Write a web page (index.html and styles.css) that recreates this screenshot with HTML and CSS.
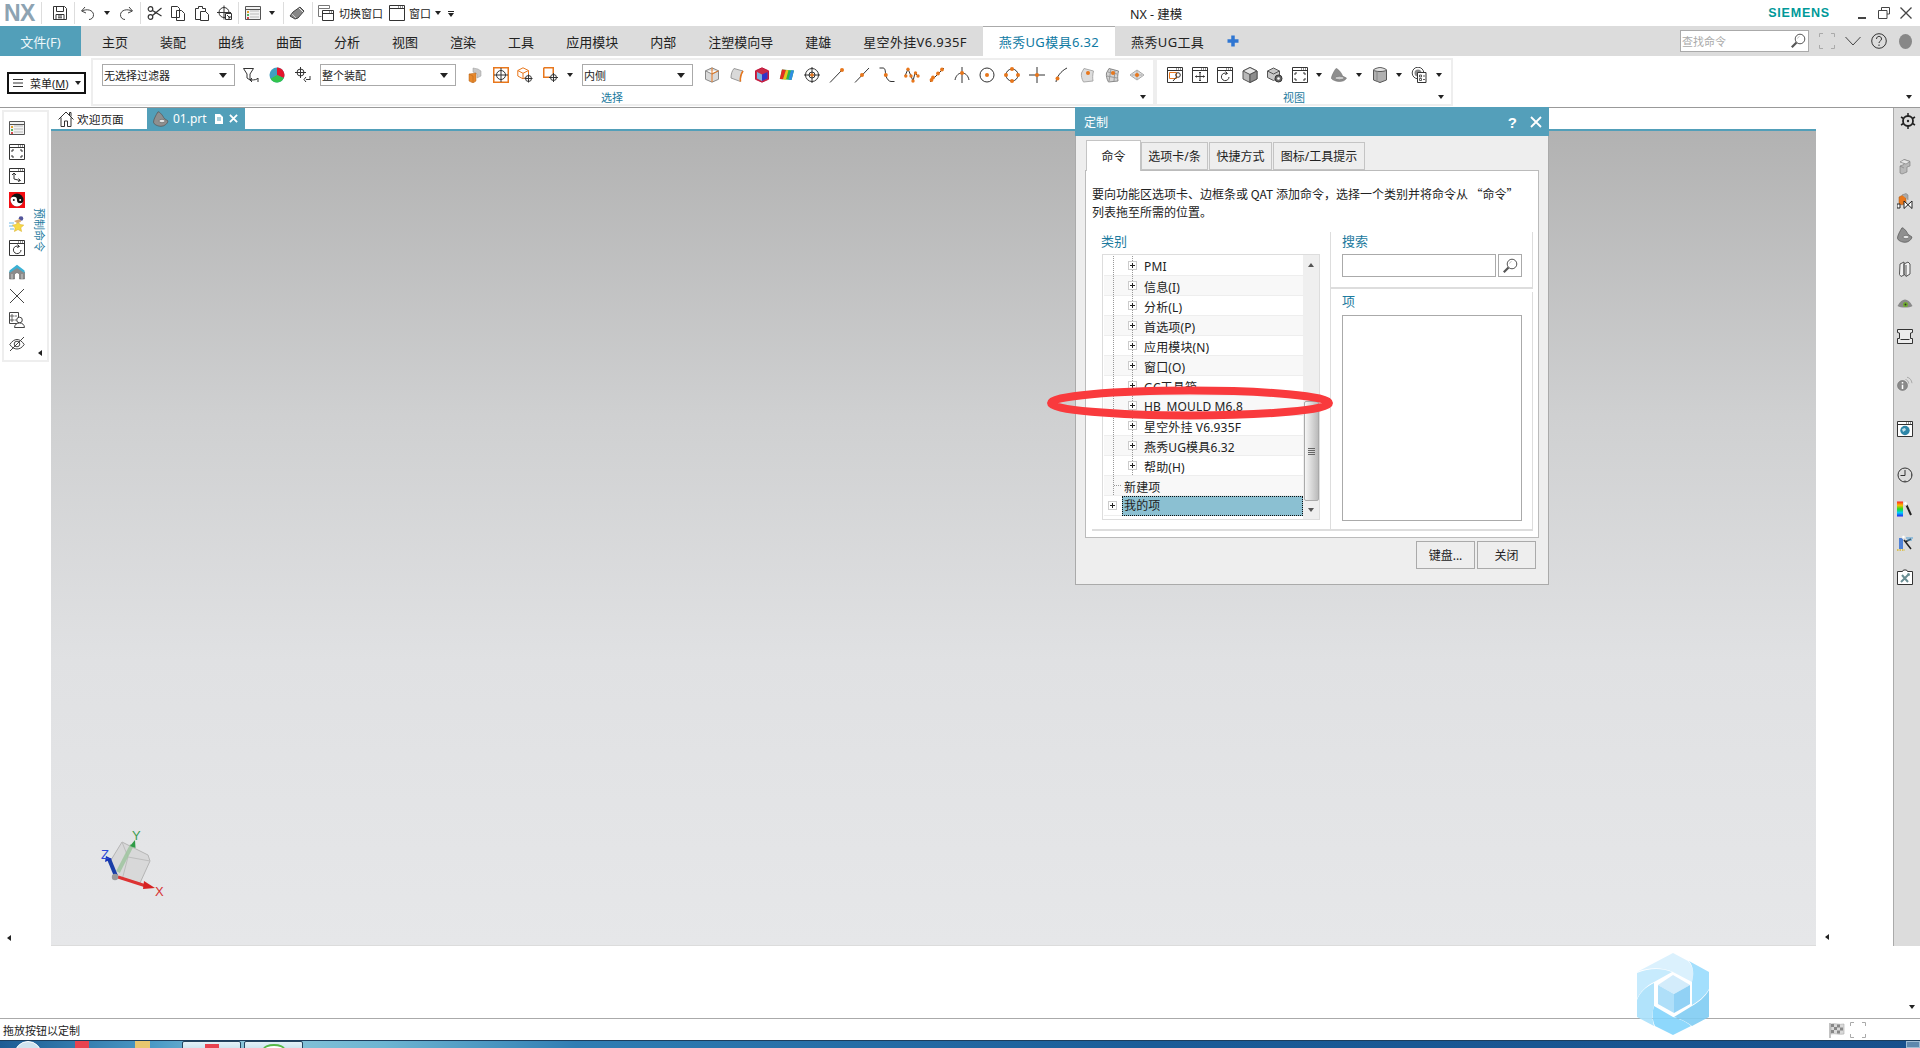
FILE: index.html
```html
<!DOCTYPE html>
<html lang="zh">
<head>
<meta charset="utf-8">
<title>NX - 建模</title>
<link rel="stylesheet" href="styles.css">
</head>
<body>
<svg class="defs" aria-hidden="true">
<defs>
<symbol id="save" viewBox="0 0 16 16"><path d="M1.5 1.5h11l2 2v11h-13z M4.5 1.5v5h7v-5 M4 14.5v-5h8v5 M6 11h4 M6 12.800h4" fill="none" stroke="#333"/></symbol>
<symbol id="undo" viewBox="0 0 16 16"><path d="M5 2 1.500 6 6 8 M2 6c5-2.500 11-1 11.500 3.500.3 3-2 5-4.500 5" fill="none" stroke="#444"/></symbol>
<symbol id="redo" viewBox="0 0 16 16"><path d="M11 2l3.500 4L10 8 M14 6C9 3.500 3 5 2.500 9.500c-.3 3 2 5 4.500 5" fill="none" stroke="#444"/></symbol>
<symbol id="cut" viewBox="0 0 16 16"><g fill="none" stroke="#333" stroke-width="1.200"><circle cx="3.500" cy="4" r="2.300"/><circle cx="3.500" cy="12" r="2.300"/><path d="M5.500 5.500 14.500 11 M5.500 10.500 14.500 3"/></g><circle cx="8.500" cy="7.800" r="1" fill="#333"/></symbol>
<symbol id="copy" viewBox="0 0 16 16"><path d="M1.500 1.500h6l2 2v9h-8z M6.500 5.500h5l3 3v7h-8z" fill="#fff" stroke="#333"/></symbol>
<symbol id="paste" viewBox="0 0 16 16"><path d="M1.500 3.500h3v-2h4v2h3v11h-10z" fill="#fff" stroke="#333"/><path d="M6.500 6.500h5l3 3v6h-8z" fill="#fff" stroke="#333"/></symbol>
<symbol id="pasteref" viewBox="0 0 16 16"><circle cx="7" cy="7.500" r="5" fill="none" stroke="#333"/><path d="M7 .5v14M0 7.500h14" stroke="#333"/><path d="M8.500 8.500h6v6h-6z" fill="#fff" stroke="#333"/><path d="M10 10l3 3m0-2v2h-2" fill="none" stroke="#333"/></symbol>
<symbol id="table" viewBox="0 0 16 16"><path d="M.5 1.500h15v13H.5z" fill="#f2f2f2" stroke="#555"/><path d="M.5 4.500h15" stroke="#555"/><path d="M2 6h2v2H2z" fill="#e5a02c"/><path d="M2 9h2v2H2z" fill="#57b45e"/><path d="M2 12h2v2H2z" fill="#d14b4b"/><path d="M5 6h9M5 9h9M5 12h9" stroke="#bbb"/></symbol>
<symbol id="pin" viewBox="0 0 16 16"><path d="M1 11l5 3 3-1 6-7-4-4-7 5z" fill="#888" stroke="#444"/><path d="M10 3l4 4" stroke="#eee"/><path d="M3 9l4 4" stroke="#ccc"/></symbol>
<symbol id="winswitch" viewBox="0 0 16 16"><path d="M.5.5h11v3H.5z M.5 3.500v8h3" fill="#fff" stroke="#777"/><path d="M4.500 5.500h11v10h-11z M4.500 8.500h11" fill="#fff" stroke="#333"/><path d="M11 7h3" stroke="#333" stroke-dasharray="1 1"/></symbol>
<symbol id="win" viewBox="0 0 16 16"><path d="M.5.5h15v15H.5z M.5 3.500h15" fill="#fff" stroke="#333"/><path d="M9 2h5" stroke="#333" stroke-dasharray="1 1"/></symbol>
<symbol id="winfit" viewBox="0 0 16 16"><path d="M.5.500h15v15H.5z M.5 3.500h15" fill="#fff" stroke="#333"/><path d="M9 2h5" stroke="#333" stroke-dasharray="1 1"/><path d="M3 8V6h2M11 6h2v2M13 11v2h-2M5 13H3v-2" fill="none" stroke="#333"/></symbol>
<symbol id="winaxes" viewBox="0 0 16 16"><path d="M.5.500h15v15H.5z M.5 3.500h15" fill="#fff" stroke="#333"/><path d="M9 2h5" stroke="#333" stroke-dasharray="1 1"/><path d="M3 7l2-2 2 2M5 5v6l6 1.500M9.500 10.500l2 2-2.500 1" fill="none" stroke="#333"/></symbol>
<symbol id="winrot" viewBox="0 0 16 16"><path d="M.5.500h15v15H.5z M.5 3.500h15" fill="#fff" stroke="#333"/><path d="M9 2h5" stroke="#333" stroke-dasharray="1 1"/><path d="M10 6.500A3.800 3.800 0 1 0 12 10M8.500 4.500l2 2-2.300 1" fill="none" stroke="#333"/></symbol>
<symbol id="winpan" viewBox="0 0 16 16"><path d="M.5.500h15v15H.5z M.5 3.500h15" fill="#fff" stroke="#333"/><path d="M9 2h5" stroke="#333" stroke-dasharray="1 1"/><path d="M8 5v9M3.500 9.500h9M7 6l1-1 1 1M7 13l1 1 1-1M4.500 8.500l-1 1 1 1M11.500 8.500l1 1-1 1" fill="none" stroke="#333"/></symbol>
<symbol id="winzoom" viewBox="0 0 16 16"><path d="M.5.500h15v15H.5z M.5 3.500h15" fill="#fff" stroke="#333"/><path d="M9 2h5" stroke="#333" stroke-dasharray="1 1"/><path d="M2.500 5.500h7v6h-7z" fill="none" stroke="#e8771c"/><circle cx="11" cy="8" r="2.300" fill="none" stroke="#333"/><path d="M9.500 10 6 14" stroke="#333"/></symbol>
<symbol id="winglobe" viewBox="0 0 16 16"><path d="M.5.500h15v15H.5z M.5 3.500h15" fill="#fff" stroke="#333"/><path d="M9 2h5" stroke="#333" stroke-dasharray="1 1"/><circle cx="8" cy="9.500" r="4.700" fill="#2e86a8"/><path d="M5 8l3-1 1 2-3 2z" fill="#bfe0ea"/></symbol>
<symbol id="filter" viewBox="0 0 16 16"><path d="M.5 1.500h10L7 7v6l-3-2V7z" fill="#fff" stroke="#333"/><path d="M9 13l-2 0M9 11l-2 2 2 2M8 13c4 0 6-.5 7-2M15 15v-4" fill="none" stroke="#333"/></symbol>
<symbol id="wheel" viewBox="0 0 16 16"><circle cx="8" cy="8" r="7.500" fill="#3f9fc0"/><path d="M8 8V.5A7.500 7.500 0 0 1 14.800 11z" fill="#e4152c"/><path d="M8 8l6.800 3A7.500 7.500 0 0 1 1.500 11.800z" fill="#31c44d"/></symbol>
<symbol id="snapback" viewBox="0 0 16 16"><circle cx="5.500" cy="5.500" r="3.500" fill="none" stroke="#333"/><path d="M5.500 0v11M0 5.500h11" stroke="#333"/><path d="M11 12.500h4M11 10l-2 2.500 2 2.500M15 9v4" fill="none" stroke="#333"/></symbol>
<symbol id="part" viewBox="0 0 16 16"><path d="M6 1l5 1 3 2v5l-4 2V7L6 5z" fill="#c8c8c8" stroke="#999" stroke-width=".5"/><path d="M2 7l7-1v8l-3 2-4-2z" fill="#e8892c" stroke="#b5641c" stroke-width=".5"/><path d="M2 7l4 2v7" fill="none" stroke="#b5641c" stroke-width=".5"/></symbol>
<symbol id="osel" viewBox="0 0 16 16"><path d="M.75.75h14.500v14.500H.75z" fill="none" stroke="#e8771c" stroke-width="1.500"/><circle cx="8" cy="8" r="4.500" fill="none" stroke="#333"/><path d="M8 1v14M1 8h14" stroke="#333"/></symbol>
<symbol id="ocube" viewBox="0 0 16 16"><path d="M6 .8 11.500 3.500v5.500L6 11.800.8 9V3.500z M.8 3.500 6 6.300l5.500-2.800M6 6.300v5.500" fill="#fff" stroke="#e8771c"/><circle cx="11.500" cy="11.500" r="3" fill="#fff" stroke="#333"/><path d="M11.500 7.500v8M7.500 11.500h8" stroke="#333"/></symbol>
<symbol id="osq" viewBox="0 0 16 16"><path d="M.75.75h9.500v9.500" fill="none" stroke="#e8771c" stroke-width="1.500"/><path d="M.75.75v9.500h7" fill="none" stroke="#e8771c" stroke-width="1.500"/><circle cx="10.500" cy="10.500" r="3" fill="#fff" stroke="#333"/><path d="M10.500 6v9M6 10.500h9" stroke="#333"/></symbol>
<symbol id="s1" viewBox="0 0 16 16"><path d="M8 .8 14.500 3.800v8.500L8 15.200 1.500 12.300V3.800z M1.500 3.800 8 7l6.500-3.200" fill="#d9d9d9" stroke="#888"/><path d="M8 7v8M8 .8v6.200L14.500 3.800" fill="none" stroke="#e8771c"/></symbol>
<symbol id="s2" viewBox="0 0 16 16"><path d="M5 1.500 14 4c-2 3-3 7-2.500 10.500L2 11C2 7 3 4 5 1.500z" fill="#d9d9d9" stroke="#999"/><path d="M14 4c-2 3-3 7-2.500 10.500" fill="none" stroke="#e8771c" stroke-width="1.500"/></symbol>
<symbol id="s3" viewBox="0 0 16 16"><path d="M8 .8 14.500 3.800v8.500L8 15.200 1.500 12.300V3.800z" fill="#c92a45" stroke="#c2153c"/><path d="M3 5 8 7.500V14L3 11.500z" fill="#79b4e0"/><path d="M8 7.500 13.500 5v6.500L8 14z" fill="#3034c9"/></symbol>
<symbol id="s4" viewBox="0 0 16 16"><path d="M3 2.500 15 3.500 12.500 13 .8 12z" fill="#2fb44a"/><path d="M3 2.500 7 3l-3 9.300L.8 12z" fill="#e42d22"/><path d="M7 3l2.500.3L7 12.500 4 12.300z" fill="#efc21b"/><path d="M12 3.200 15 3.500 12.500 13l-3-.2z" fill="#2f8fe4"/></symbol>
<symbol id="s5" viewBox="0 0 16 16"><circle cx="8" cy="8" r="6.500" fill="none" stroke="#333"/><circle cx="8" cy="8" r="3" fill="none" stroke="#333"/><path d="M8 0v16M0 8h16" stroke="#333"/><circle cx="8" cy="8" r="1.800" fill="#e8771c"/></symbol>
<symbol id="s6" viewBox="0 0 16 16"><path d="M1 15.500 13 3" stroke="#333"/><circle cx="13" cy="3" r="2" fill="#e8771c"/></symbol>
<symbol id="s7" viewBox="0 0 16 16"><path d="M1 15.500 15 1" stroke="#333"/><circle cx="8" cy="8" r="2" fill="#e8771c"/></symbol>
<symbol id="s8" viewBox="0 0 16 16"><path d="M.5 1H4c3 0 2 5 3 8 .8 3 3 5.500 5 5.500h3.500" fill="none" stroke="#333"/><circle cx="6.800" cy="8" r="2" fill="#e8771c"/></symbol>
<symbol id="s9" viewBox="0 0 16 16"><path d="M1 9l3-7 3 7 2 5 2-8 3 3" fill="none" stroke="#333"/><g fill="#e8771c"><circle cx="1.800" cy="9" r="1.700"/><circle cx="4" cy="2.200" r="1.700"/><circle cx="7" cy="9" r="1.700"/><circle cx="9" cy="14" r="1.700"/><circle cx="11.500" cy="6" r="1.700"/><circle cx="14" cy="9" r="1.700"/></g></symbol>
<symbol id="s10" viewBox="0 0 16 16"><path d="M1 15 15 1" stroke="#333" fill="none"/><g fill="#e8771c"><circle cx="2.500" cy="13" r="1.900"/><circle cx="4" cy="10.500" r="1.900"/><circle cx="9" cy="6.500" r="1.900"/><circle cx="13" cy="2.500" r="1.900"/></g></symbol>
<symbol id="s11" viewBox="0 0 16 16"><path d="M8 0v16M1 13C2 8 5 6 8 6s6 2 7 7" fill="none" stroke="#333"/><circle cx="8" cy="6" r="2" fill="#e8771c"/></symbol>
<symbol id="s12" viewBox="0 0 16 16"><circle cx="8" cy="8" r="7" fill="none" stroke="#333"/><circle cx="8" cy="8" r="2" fill="#e8771c"/></symbol>
<symbol id="s13" viewBox="0 0 16 16"><circle cx="8" cy="8" r="6" fill="none" stroke="#333"/><g fill="#e8771c"><circle cx="8" cy="2" r="2"/><circle cx="8" cy="14" r="2"/><circle cx="2" cy="8" r="2"/><circle cx="14" cy="8" r="2"/></g></symbol>
<symbol id="s14" viewBox="0 0 16 16"><path d="M8 0v16M0 8h16" stroke="#333"/><circle cx="8" cy="8" r="2" fill="#e8771c"/></symbol>
<symbol id="s15" viewBox="0 0 16 16"><path d="M2 15c.5-5 5-11 11-14" fill="none" stroke="#333"/><circle cx="3.500" cy="11.500" r="2" fill="#e8771c"/></symbol>
<symbol id="s16" viewBox="0 0 16 16"><path d="M5 1.500 14.500 4c-1 4-1 7-.5 10L4.500 15C2.800 12 2 9 2.500 6z" fill="#ddd" stroke="#aaa"/><circle cx="9" cy="6" r="2" fill="#e8771c"/></symbol>
<symbol id="s17" viewBox="0 0 16 16"><path d="M5 1.500 14.500 4c-1 4-1 7-.5 10L4.500 15C2.800 12 2 9 2.500 6z" fill="#d4d4d4" stroke="#888"/><path d="M4 5l9 2M3 9l10 2M7 2l-2 12M11 3l-1 11" stroke="#999" fill="none"/><circle cx="9" cy="6" r="2" fill="#e8771c"/></symbol>
<symbol id="s18" viewBox="0 0 16 16"><path d="M8 3l7 5-7 5-7-5z" fill="#ddd" stroke="#aaa"/><path d="M3 8h10M8 4v8" stroke="#aaa"/><circle cx="8" cy="8" r="2" fill="#e8771c"/></symbol>
<symbol id="cube" viewBox="0 0 16 16"><path d="M8 .5 15 4v8l-7 3.500L1 12V4z" fill="#b8b8b8" stroke="#555"/><path d="M1 4l7 3.500L15 4 8 .5z" fill="#e6e6e6" stroke="#555"/><path d="M8 7.500v8" stroke="#555"/><path d="M8 7.500 15 4v8l-7 3.500z" fill="#8c8c8c" stroke="#555"/></symbol>
<symbol id="cubegear" viewBox="0 0 16 16"><path d="M6.500 1 12.500 4v6.500l-6 3-6-3V4z" fill="#c8c8c8" stroke="#555"/><path d="M.5 4l6 3 6-3" fill="none" stroke="#555"/><circle cx="11.500" cy="11.500" r="3.500" fill="#666" stroke="#333"/><circle cx="11.500" cy="11.500" r="1.300" fill="#fff"/></symbol>
<symbol id="shade" viewBox="0 0 16 16"><path d="M5 1.500c2 0 6 5 6.500 7.500l4 2c-1 2.500-4 3.500-7 3.500S1 13 .5 11.500 3 4 5 1.500z" fill="#8e8e8e" stroke="#666" stroke-width=".5"/><ellipse cx="8.500" cy="11" rx="4.500" ry="1.700" fill="#ccc" stroke="#666" stroke-width=".5"/></symbol>
<symbol id="cyl" viewBox="0 0 16 16"><path d="M8 .5 14.500 3v10L8 15.500 1.500 13V3z" fill="#b0b0b0" stroke="#555"/><path d="M1.500 3C3 5 13 5 14.500 3 13 1 8 .5 8 .5S3 1 1.500 3z" fill="#e2e2e2" stroke="#555"/><path d="M5 4.500v10.500" stroke="#888"/></symbol>
<symbol id="viewlist" viewBox="0 0 16 16"><circle cx="7" cy="6" r="5.800" fill="#fff" stroke="#444"/><circle cx="7" cy="6" r="3.500" fill="#888"/><path d="M6.500 5.500h8.500v10H6.500z" fill="#fff" stroke="#333"/><path d="M8.500 8h2v2h-2zM8.500 11.500h2v2h-2zM12 9h2M12 12.500h2" fill="none" stroke="#333" stroke-width=".8"/></symbol>
<symbol id="yin" viewBox="0 0 16 16"><path d="M0 0h16v16H0z" fill="#f30d12"/><circle cx="8" cy="8" r="6.500" fill="#111"/><path d="M1.500 8A6.500 6.500 0 0 1 8 1.500 3.250 3.250 0 0 1 8 8a3.250 3.250 0 0 0 0 6.500A6.500 6.500 0 0 1 1.500 8z" fill="#fff" transform="rotate(-90 8 8)"/><circle cx="4.800" cy="8" r="1" fill="#111"/><circle cx="11.200" cy="8" r="1" fill="#fff"/></symbol>
<symbol id="star" viewBox="0 0 16 16"><path d="M9 5l1.800 3.500 4 .6-3 2.700.8 3.700L9 13.500l-3.600 2 .8-3.700-3-2.700 4-.6z" fill="#f7d945" stroke="#d5a920" stroke-width=".5"/><path d="M0 7h5M0 10h4M1 13h4" stroke="#6fb7e6"/><circle cx="12" cy="2.500" r="2.300" fill="#54569c"/><path d="M5 5l6-2 1 3-4 1z" fill="#dcab6d"/></symbol>
<symbol id="arch" viewBox="0 0 16 16"><path d="M.5 8 8 2l7.500 6v7h-5V10L8 8.500 5.500 10v5h-5z" fill="#8b8b8b" stroke="#555" stroke-width=".5"/><path d="M.5 6.500 8 .8l7.500 5.700V9L8 4 .5 9z" fill="#3bb2d6"/><path d="M3 10v5M13 10v5" stroke="#ccc"/></symbol>
<symbol id="xmark" viewBox="0 0 16 16"><path d="M1 1l14 14M15 1 1 15" stroke="#444" fill="none"/></symbol>
<symbol id="docuser" viewBox="0 0 16 16"><path d="M.5.500h9v11H.5z" fill="#fff" stroke="#444"/><path d="M2 3h2v2H2zM2 7h2v2H2zM5.500 4h2.500M5.500 8h2" fill="none" stroke="#444" stroke-width=".8"/><circle cx="10.500" cy="8" r="2.800" fill="#fff" stroke="#444"/><path d="M5.500 15.500c.3-3 2-4.500 5-4.500s4.700 1.500 5 4.500z" fill="#fff" stroke="#444"/></symbol>
<symbol id="eyeoff" viewBox="0 0 16 16"><path d="M.8 8.500C3 5.200 5.500 3.500 8 3.500s5 1.700 7.200 5C13 11.800 10.500 13 8 13S3 11.800.8 8.500z" fill="none" stroke="#444"/><circle cx="8" cy="8" r="2.800" fill="none" stroke="#444"/><path d="M1 15 15 1" stroke="#444"/></symbol>
<symbol id="gear" viewBox="0 0 16 16"><circle cx="8" cy="8" r="5" fill="none" stroke="#222" stroke-width="1.800"/><circle cx="8" cy="8" r="1.200" fill="#222"/><path d="M8 0v3M8 13v3M1 4l2.500 1.500M12.500 10.500 15 12M1 12l2.500-1.500M12.500 5.500 15 4" stroke="#222" stroke-width="1.500"/></symbol>
<symbol id="blocks" viewBox="0 0 16 16"><path d="M7 .5l6 2v4.500l-3 1v5l-5 2-2-1V7l4-1.500z" fill="#b8b8b8" stroke="#777" stroke-width=".6"/><path d="M7 .5 3 3l6 2 4-2.500zM3 7l4 2" fill="#e6e6e6" stroke="#777" stroke-width=".6"/></symbol>
<symbol id="hour" viewBox="0 0 16 16"><path d="M2 4l4-2 3 1.500V10l-4 2-3-1.500z" fill="#e8771c" stroke="#9c5414" stroke-width=".5"/><path d="M5 2l4-1.500 2 1.500v5" fill="#aaa" stroke="#777" stroke-width=".5"/><path d="M0 11v4h3v-4zM7 8l8 7.500V8L7 15.500z" fill="#fff" stroke="#222"/></symbol>
<symbol id="shell" viewBox="0 0 16 16"><path d="M5 .8c2 0 5 4 6 6.500l4 2.700c-.5 3-4 5.300-7 5.300S.5 13.500.5 11 3 4 5 .8z" fill="#8f8f8f" stroke="#555" stroke-width=".7"/><ellipse cx="9" cy="10" rx="3" ry="1.700" fill="#e4e4e4" stroke="#555" stroke-width=".6"/></symbol>
<symbol id="books" viewBox="0 0 16 16"><path d="M3 3l4-2v13l-3 1.500-1.500-2zM7 3l4-2 2 2v10l-4 2.500L7 13z" fill="#f1f1f1" stroke="#555"/><path d="M9 4v11" stroke="#555"/></symbol>
<symbol id="eye" viewBox="0 0 16 16"><path d="M.5 11C3 6.500 5.500 4.500 8 4.500S13 6.500 15.500 11C12 13 4 13 .5 11z" fill="#8a8a8a"/><circle cx="8.500" cy="9.500" r="2.500" fill="#6fae2d"/><circle cx="8.500" cy="9.500" r="1" fill="#333"/></symbol>
<symbol id="monitor" viewBox="0 0 16 16"><path d="M.5.500h15v3l-2 .5v5.500h2v5H.5v-5h2V4l-2-.5z" fill="#ececec" stroke="#333"/><path d="M3.500 10.500h9" stroke="#333"/></symbol>
<symbol id="info" viewBox="0 0 16 16"><circle cx="5.500" cy="10.500" r="5" fill="#8a8a8a" stroke="#666" stroke-width=".5"/><path d="M5.500 7v1.500M5.500 9.800V14" stroke="#fff" stroke-width="1.500"/><path d="M8.500 4.500c2 .5 3 2 3.200 4M10 2.200c3 .7 4.500 2.800 5 6" fill="none" stroke="#aaa"/></symbol>
<symbol id="clock" viewBox="0 0 16 16"><circle cx="8" cy="8" r="7" fill="none" stroke="#333"/><path d="M8 3v5.500H3.500M8 13.500v1.500M15 8h-1" fill="none" stroke="#333"/></symbol>
<symbol id="spectrum" viewBox="0 0 16 16"><defs><linearGradient id="rb" x1="0" x2="0" y1="0" y2="1"><stop offset="0" stop-color="#f22"/><stop offset=".25" stop-color="#fb0"/><stop offset=".5" stop-color="#2d2"/><stop offset=".75" stop-color="#0cf"/><stop offset="1" stop-color="#22e"/></linearGradient></defs><path d="M0 .5h6v15H0z" fill="url(#rb)"/><path d="M9 3l5 11" stroke="#222" stroke-width="2"/><circle cx="8.500" cy="2.500" r="2" fill="#fff" stroke="#ddd"/></symbol>
<symbol id="bluewand" viewBox="0 0 16 16"><path d="M2 3h4v11H2z" fill="#4d80d6"/><path d="M0 15h8" stroke="#d9b92c" stroke-width="1.500" stroke-dasharray="1.500 1"/><path d="M7 5l7 9M8 7l6-3" stroke="#222" stroke-width="1.500"/><path d="M9 3h7M10 5h5" stroke="#4d9ed6"/><circle cx="6.500" cy="2" r="1.800" fill="#fff" stroke="#ddd"/></symbol>
<symbol id="tools" viewBox="0 0 16 16"><path d="M.5 2.500h5l1-1.500h3l1 1.500h5v13H.5z" fill="#fff" stroke="#333"/><path d="M4 13 11 6M5 6l6 7" stroke="#6b8f94" stroke-width="2"/><circle cx="11.500" cy="5.500" r="1.500" fill="#6b8f94"/></symbol>
<symbol id="home" viewBox="0 0 16 16"><path d="M.5 8.500 8 1l7.500 7.500M3 6.500v9h3.500V10h3v5.500H13v-9M11.500 4V1.500H13v4" fill="none" stroke="#333"/></symbol>
<symbol id="mag" viewBox="0 0 16 16"><circle cx="10" cy="6" r="4.800" fill="#fff" stroke="#555"/><path d="M6.500 9.500 1.800 14.200" stroke="#555" stroke-width="2.200"/><path d="M7.500 5.500c.3-1 1-1.700 2-2" stroke="#bbb" fill="none"/></symbol>
<symbol id="corners" viewBox="0 0 16 16"><path d="M.5 4V.5H4M12 .5h3.500V4M15.500 12v3.500H12M4 15.500H.5V12" fill="none" stroke="#aaa"/></symbol>
<symbol id="flag" viewBox="0 0 16 16"><path d="M1 1v15" stroke="#aaa" stroke-width="1.400"/><path d="M2 2c4-1 8 1 13 0v10c-5 1-9-1-13 0z" fill="#d9d9d9" stroke="#aaa" stroke-width=".6"/><path d="M2 2h3v3H2zM8 2.500h3v3H8zM5 5h3v3H5zM11 5.500h3v3h-3zM2 8h3v3H2zM8 8.500h3v3H8z" fill="#888"/></symbol>
</defs>
</svg>

<header class="titlebar">
  <span class="nx">NX</span>
  <i class="sep ml5"></i>
  <svg class="i ml10"><use href="#save"/></svg>
  <i class="sep ml6"></i>
  <svg class="i ml5"><use href="#undo"/></svg>
  <i class="drop ml8"></i>
  <svg class="i ml8"><use href="#redo"/></svg>
  <i class="sep ml6"></i>
  <svg class="i ml6"><use href="#cut"/></svg>
  <svg class="i ml7"><use href="#copy"/></svg>
  <svg class="i ml8"><use href="#paste"/></svg>
  <svg class="i ml7"><use href="#pasteref"/></svg>
  <i class="sep ml5"></i>
  <svg class="i ml6"><use href="#table"/></svg>
  <i class="drop ml8"></i>
  <i class="sep ml8"></i>
  <svg class="i ml5"><use href="#pin"/></svg>
  <i class="sep ml7"></i>
  <svg class="i ml5"><use href="#winswitch"/></svg>
  <span class="qa-label ml5">切换窗口</span>
  <svg class="i ml6"><use href="#win"/></svg>
  <span class="qa-label ml4">窗口</span>
  <i class="drop ml4"></i>
  <i class="drop-bar ml7"></i>
  <span class="apptitle">NX - 建模</span>
  <span class="siemens">SIEMENS</span>
  <span class="wc-min"></span>
  <svg class="wc-restore" viewBox="0 0 12 12"><path d="M3.500 3V.5h8V7H9M.5 3.500H9v8H.5z" fill="#fff" stroke="#444"/></svg>
  <svg class="wc-close" viewBox="0 0 12 12"><path d="M.5.500l11 11M11.500.500l-11 11" stroke="#444" stroke-width="1.300" fill="none"/></svg>
</header>

<nav class="tabbar">
  <span class="filetab">文件(F)</span>
  <span class="tab">主页</span>
  <span class="tab">装配</span>
  <span class="tab">曲线</span>
  <span class="tab">曲面</span>
  <span class="tab">分析</span>
  <span class="tab">视图</span>
  <span class="tab">渲染</span>
  <span class="tab">工具</span>
  <span class="tab">应用模块</span>
  <span class="tab">内部</span>
  <span class="tab">注塑模向导</span>
  <span class="tab">建雄</span>
  <span class="tab spaced">星空外挂V6.935F</span>
  <span class="tab active spaced">燕秀UG模具6.32</span>
  <span class="tab spaced">燕秀UG工具</span>
  <svg class="plus" viewBox="0 0 12 12"><path d="M6 .5v11M.5 6h11" stroke="#2f76d2" stroke-width="3.500"/></svg>
  <div class="tabtools">
    <div class="cmdsearch"><span>查找命令</span><svg class="i"><use href="#mag"/></svg></div>
    <svg class="i ml10"><use href="#corners"/></svg>
    <svg class="i ml10" viewBox="0 0 16 16"><path d="M.5 4 8 12l7.500-8" fill="none" stroke="#444"/></svg>
    <svg class="i ml10" viewBox="0 0 16 16"><circle cx="8" cy="8" r="7.300" fill="none" stroke="#333"/><path d="M5.500 6c0-3.500 5-3.500 5 0 0 2-2.500 2-2.500 4M8 11.500v1.500" fill="none" stroke="#333"/></svg>
    <span class="dot"></span>
  </div>
</nav>

<section class="ribbon">
  <div class="menubtn">
    <svg class="burger" viewBox="0 0 10 10"><path d="M0 1.500h10M0 5h10M0 8.500h10" stroke="#333"/></svg>
    <span>菜单(<u>M</u>)</span>
    <i class="drop"></i>
  </div>
  <div class="rgroup g-select">
    <div class="rrow">
      <div class="select s1 ml9"><span>无选择过滤器</span><i class="drop"></i></div>
      <svg class="i ml8"><use href="#filter"/></svg>
      <svg class="i ml10"><use href="#wheel"/></svg>
      <svg class="i ml10"><use href="#snapback"/></svg>
      <div class="select s2 ml9"><span>整个装配</span><i class="drop"></i></div>
      <svg class="i ml11"><use href="#part"/></svg>
      <svg class="i ml10"><use href="#osel"/></svg>
      <svg class="i ml8"><use href="#ocube"/></svg>
      <svg class="i ml10"><use href="#osq"/></svg>
      <i class="drop ml8"></i>
      <div class="select s3 ml9"><span>内侧</span><i class="drop"></i></div>
      <div class="snapset ml11">
        <svg class="i"><use href="#s1"/></svg><svg class="i"><use href="#s2"/></svg><svg class="i"><use href="#s3"/></svg>
        <svg class="i"><use href="#s4"/></svg><svg class="i"><use href="#s5"/></svg><svg class="i"><use href="#s6"/></svg>
        <svg class="i"><use href="#s7"/></svg><svg class="i"><use href="#s8"/></svg><svg class="i"><use href="#s9"/></svg>
        <svg class="i"><use href="#s10"/></svg><svg class="i"><use href="#s11"/></svg><svg class="i"><use href="#s12"/></svg>
        <svg class="i"><use href="#s13"/></svg><svg class="i"><use href="#s14"/></svg><svg class="i"><use href="#s15"/></svg>
        <svg class="i"><use href="#s16"/></svg><svg class="i"><use href="#s17"/></svg><svg class="i"><use href="#s18"/></svg>
      </div>
    </div>
    <div class="rlabel lab-sel"><span>选择</span><i class="drop"></i></div>
  </div>
  <div class="rgroup g-view">
    <div class="rrow">
      <div class="snapset ml10">
        <svg class="i"><use href="#winzoom"/></svg><svg class="i"><use href="#winpan"/></svg><svg class="i"><use href="#winrot"/></svg>
        <svg class="i"><use href="#cube"/></svg><svg class="i"><use href="#cubegear"/></svg><svg class="i"><use href="#winfit"/></svg>
      </div>
      <i class="drop ml8"></i>
      <svg class="i ml9"><use href="#shade"/></svg>
      <i class="drop ml9"></i>
      <svg class="i ml10"><use href="#cyl"/></svg>
      <i class="drop ml8"></i>
      <svg class="i ml9"><use href="#viewlist"/></svg>
      <i class="drop ml9"></i>
    </div>
    <div class="rlabel lab-view"><span>视图</span><i class="drop"></i></div>
  </div>
  <i class="drop far"></i>
</section>

<main class="workspace">
  <aside class="leftcol">
    <div class="leftpanel">
      <div class="lefticons">
        <svg class="i"><use href="#table"/></svg>
        <svg class="i"><use href="#winfit"/></svg>
        <svg class="i"><use href="#winaxes"/></svg>
        <svg class="i"><use href="#yin"/></svg>
        <svg class="i"><use href="#star"/></svg>
        <svg class="i"><use href="#winrot"/></svg>
        <svg class="i"><use href="#arch"/></svg>
        <svg class="i"><use href="#xmark"/></svg>
        <svg class="i"><use href="#docuser"/></svg>
        <svg class="i"><use href="#eyeoff"/></svg>
      </div>
      <div class="leftside">
        <span class="vlabel">预制命令</span>
        <i class="arrow-left"></i>
      </div>
    </div>
    <i class="arrow-left low"></i>
  </aside>
  <div class="centercol">
    <div class="doctabs">
      <svg class="i ml7"><use href="#home"/></svg>
      <span class="doctab">欢迎页面</span>
      <div class="doctab-active">
        <svg class="i"><use href="#shell"/></svg>
        <span>01.prt</span>
        <svg class="docsm" viewBox="0 0 10 12"><path d="M1 1h5l3 3v7H1z" fill="#fff"/><path d="M3 5h4M3 7h4" stroke="#529fb9"/></svg>
        <svg class="docx" viewBox="0 0 10 10"><path d="M1 1l8 8M9 1 1 9" stroke="#fff" stroke-width="2"/></svg>
      </div>
    </div>
    <div class="graphics">
      <svg class="triad" viewBox="0 0 110 110">
        <path d="M42 34 68 47 70 53 60 75 35 68 31 52z" fill="#d6d6d6" fill-opacity=".85" stroke="#b5b5b5"/>
        <path d="M48 49 70 53M48 49 42 34M48 49 42 72" fill="none" stroke="#bdbdbd"/>
        <path d="M38 64 52 37" stroke="#9cc49c" stroke-width="4" opacity=".8"/>
        <path d="M50 38l5-6 .5 8z" fill="#2e9b46"/>
        <path d="M36 68 29 51" stroke="#1a3ea8" stroke-width="4"/>
        <path d="M25 54l1-6 6 3z" fill="#1432b8"/>
        <path d="M38 69 66 78" stroke="#d33" stroke-width="3"/>
        <path d="M64 73l11 7-12 1z" fill="#d62222"/>
        <circle cx="35" cy="69" r="3.200" fill="#9a9a9a"/>
        <text class="ax ax-y" x="52" y="32">Y</text>
        <text class="ax ax-z" x="21" y="51">Z</text>
        <text class="ax ax-x" x="75" y="88">X</text>
      </svg>
    </div>
  </div>
  <div class="gutter"><i class="arrow-left low"></i></div>
  <aside class="rightbar">
    <svg class="i gearicon"><use href="#gear"/></svg>
    <svg class="i big"><use href="#blocks"/></svg>
    <svg class="i"><use href="#hour"/></svg>
    <svg class="i"><use href="#shell"/></svg>
    <svg class="i"><use href="#books"/></svg>
    <svg class="i"><use href="#eye"/></svg>
    <svg class="i"><use href="#monitor"/></svg>
    <svg class="i big"><use href="#info"/></svg>
    <svg class="i big"><use href="#winglobe"/></svg>
    <svg class="i big"><use href="#clock"/></svg>
    <svg class="i"><use href="#spectrum"/></svg>
    <svg class="i"><use href="#bluewand"/></svg>
    <svg class="i"><use href="#tools"/></svg>
  </aside>
</main>

<div class="blank"><i class="drop"></i></div>

<footer class="status">
  <span>拖放按钮以定制</span>
  <svg class="i flag"><use href="#flag"/></svg>
  <svg class="i ml5"><use href="#corners"/></svg>
</footer>
<div class="taskbar">
  <span class="orb"></span>
  <span class="flagapp first"></span>
  <span class="folderapp"></span>
  <span class="taskbtn b1"><span class="flagapp"></span></span>
  <span class="taskbtn b2"><span class="greenapp"></span></span>
  <span class="clock">12:33</span>
  <span class="showdesk"></span>
</div>

<section class="dialog">
  <div class="dlg-title">
    <span>定制</span>
    <b class="dlg-help">?</b>
    <svg class="dlg-x" viewBox="0 0 12 12"><path d="M1 1l10 10M11 1 1 11" stroke="#fff" stroke-width="1.800"/></svg>
  </div>
  <div class="dlg-tabs">
    <span class="dt on">命令</span>
    <span class="dt t2">选项卡/条</span>
    <span class="dt t3">快捷方式</span>
    <span class="dt t4">图标/工具提示</span>
  </div>
  <div class="dlg-panel">
    <p class="dlg-desc">要向功能区选项卡、边框条或 QAT 添加命令，选择一个类别并将命令从 “命令”<br>列表拖至所需的位置。</p>
    <div class="dlg-cols">
      <div class="cat">
        <h4>类别</h4>
        <div class="tree">
          <div class="rows">
            <div class="row lv2"><i class="pb"></i><span>PMI</span></div>
            <div class="row lv2 alt"><i class="pb"></i><span>信息(I)</span></div>
            <div class="row lv2"><i class="pb"></i><span>分析(L)</span></div>
            <div class="row lv2 alt"><i class="pb"></i><span>首选项(P)</span></div>
            <div class="row lv2"><i class="pb"></i><span>应用模块(N)</span></div>
            <div class="row lv2 alt"><i class="pb"></i><span>窗口(O)</span></div>
            <div class="row lv2"><i class="pb"></i><span>GC工具箱</span></div>
            <div class="row lv2 alt"><i class="pb"></i><span>HB_MOULD M6.8</span></div>
            <div class="row lv2"><i class="pb"></i><span>星空外挂 V6.935F</span></div>
            <div class="row lv2 alt"><i class="pb"></i><span>燕秀UG模具6.32</span></div>
            <div class="row lv2"><i class="pb"></i><span>帮助(H)</span></div>
            <div class="row lv1 alt"><i class="tick"></i><span>新建项</span></div>
            <div class="row lv1 last"><i class="pb"></i><span class="sel">我的项</span></div>
          </div>
          <div class="sb">
            <i class="sb-up"></i>
            <div class="sb-thumb"><i></i></div>
            <i class="sb-down"></i>
          </div>
        </div>
      </div>
      <div class="side">
        <div class="searchbox">
          <h4>搜索</h4>
          <div class="searchrow"><span class="field"></span><span class="magbtn"><svg class="i"><use href="#mag"/></svg></span></div>
        </div>
        <div class="itembox">
          <h4>项</h4>
          <div class="itemlist"></div>
        </div>
      </div>
    </div>
  </div>
  <div class="dlg-foot">
    <span class="btn">键盘...</span>
    <span class="btn">关闭</span>
  </div>
</section>

<svg class="redring" viewBox="0 0 286 34"><ellipse cx="143" cy="17" rx="139" ry="12.500" fill="none" stroke="#f93a3d" stroke-width="8"/></svg>

<svg class="mark" viewBox="0 0 72 82">
  <path d="M0 19 36 0 51 8C57 14 57 22 55 29L36 19C25 14 12 14 0 19z" fill="#d8f0fd"/>
  <path d="M52 8 72 19V36C68 43 62 48 55 52V29C57 22 57 14 52 8z" fill="#9adcfd"/>
  <path d="M72 37V64L55 73C50 69 44 66 37 64L55 53C62 49 68 44 72 37z" fill="#80cdf3"/>
  <path d="M54 73 36 82 18 73C15 66 15 60 17 53L36 64C43 66 50 69 54 73z" fill="#82d4fc"/>
  <path d="M17 73 0 64V47C3 39 9 34 17 30V53C15 60 15 66 17 73z" fill="#a9e1fb"/>
  <path d="M0 46V20C12 15 25 15 35 19L17 29C9 33 3 39 0 46z" fill="#c2e9fd"/>
  <path d="M36 22 53 32 37 41 21 32z" fill="#cfeafb"/>
  <path d="M21 32 37 41V60L21 51z" fill="#a7dcf9"/>
  <path d="M53 32 37 41V60L53 51z" fill="#86cdf4"/>
</svg>
</body>
</html>
```
FILE: styles.css
```css
* { box-sizing: border-box; }
html, body { margin: 0; padding: 0; }
body {
  width: 1920px;
  height: 1048px;
  overflow: hidden;
  position: relative;
  display: flex;
  flex-direction: column;
  background: #fff;
  color: #222;
  font: 12px "Noto Sans", "Noto Sans CJK SC", sans-serif;
}
i { display: block; font-style: normal; flex: none; }
svg { flex: none; display: block; }
.defs { position: absolute; width: 0; height: 0; }
.i { width: 16px; height: 16px; }
.ml4 { margin-left: 4px; } .ml5 { margin-left: 5px; } .ml6 { margin-left: 6px; }
.ml7 { margin-left: 7px; } .ml8 { margin-left: 8px; } .ml9 { margin-left: 9px; }
.ml10 { margin-left: 10px; } .ml11 { margin-left: 11px; }
.drop { width: 0; height: 0; border: 3px solid transparent; border-top: 4px solid #222; border-bottom: 0; }
.drop-bar { width: 6px; height: 5px; border-top: 1px solid #222; position: relative; }
.drop-bar::after { content: ""; display: block; margin-top: 1px; width: 0; border: 3px solid transparent; border-top: 4px solid #222; border-bottom: 0; }

/* title bar */
.titlebar { height: 26px; flex: none; display: flex; align-items: center; padding: 0 8px 0 4px; background: #fff; }
.nx { width: 32px; font: bold 23px/26px "Liberation Sans", sans-serif; color: #8da3b2; letter-spacing: -.5px; white-space: nowrap; }
.sep { width: 1px; height: 22px; background: #ddd; }
.qa-label { font-size: 11px; white-space: nowrap; }
.apptitle { margin-left: 676px; font-size: 12.500px; white-space: nowrap; }
.siemens { margin-left: auto; font: bold 12.500px "Liberation Sans", sans-serif; color: #009999; letter-spacing: .8px; }
.wc-min { width: 8px; height: 2px; background: #444; margin: 9px 0 0 28px; }
.wc-restore { width: 12px; height: 12px; margin-left: 12px; }
.wc-close { width: 12px; height: 12px; margin-left: 10px; }

/* tabs */
.tabbar { height: 30px; flex: none; display: flex; align-items: stretch; background: #dcdcdc; font-size: 13px; }
.filetab { width: 81px; margin-right: 5px; background: #529fb9; color: #eef7fa; display: flex; align-items: center; justify-content: center; }
.tab { padding: 0 16px; display: flex; align-items: center; white-space: nowrap; }
.tab.spaced { letter-spacing: .35px; }
.tab.active { background: #fff; border-top: 1px solid #aaa; color: #0f7aa3; }
.plus { width: 12px; height: 12px; align-self: center; margin-left: 7px; }
.tabtools { margin-left: auto; display: flex; align-items: center; padding-right: 8px; }
.cmdsearch { width: 129px; height: 22px; background: #fff; border: 1px solid #aaa; display: flex; align-items: center; justify-content: space-between; padding: 0 2px 0 1px; font-size: 11px; color: #aaa; }
.dot { width: 13px; height: 15px; border-radius: 50%; background: #888; margin-left: 12px; }

/* ribbon */
.ribbon { height: 52px; flex: none; display: flex; align-items: flex-start; border-bottom: 1px solid #999; padding-top: 2px; background: #fff; }
.menubtn { width: 79px; height: 22px; margin: 14px 0 0 7px; border: 2px solid #111; display: flex; align-items: center; font-size: 11px; padding-left: 4px; }
.burger { width: 10px; height: 10px; margin-right: 7px; }
.menubtn .drop { margin-left: 6px; }
.rgroup { height: 48px; border: 2px solid #eee; display: flex; flex-direction: column; }
.g-select { width: 1064px; margin-left: 5px; }
.g-view { width: 298px; }
.rrow { height: 30px; display: flex; align-items: center; flex: none; }
.rlabel { height: 14px; display: flex; align-items: center; font-size: 11px; color: #1c7a9e; }
.lab-sel { padding-left: 508px; }
.lab-sel .drop { margin-left: 517px; }
.lab-view { padding-left: 126px; }
.lab-view .drop { margin-left: 133px; }
.far { margin: 37px 0 0 453px; }
.select { height: 22px; border: 1px solid #aaa; display: flex; align-items: center; justify-content: space-between; padding: 0 7px 0 1px; font-size: 11px; }
.select .drop { border-width: 5px 4px 0; }
.s1 { width: 133px; } .s2 { width: 136px; } .s3 { width: 111px; }
.snapset { display: flex; gap: 9px; }

/* workspace */
.workspace { height: 838px; flex: none; display: flex; }
.leftcol { width: 51px; flex: none; display: flex; flex-direction: column; padding: 2px 0 5px 2px; }
.leftpanel { width: 47px; height: 252px; border: 2px solid #eee; display: flex; }
.lefticons { width: 26px; display: flex; flex-direction: column; gap: 8px; padding: 8px 0 0 5px; }
.leftside { flex: 1; display: flex; flex-direction: column; align-items: center; padding: 96px 0 0 3px; }
.vlabel { writing-mode: vertical-rl; text-orientation: sideways; font-size: 11px; line-height: 15px; color: #1c7a9e; white-space: nowrap; }
.arrow-left { width: 0; height: 0; border: 3px solid transparent; border-right: 4px solid #222; border-left: 0; }
.leftside .arrow-left { margin-top: auto; margin-bottom: 4px; }
.leftcol > .arrow-left { margin: auto 0 0 5px; }
.centercol { width: 1765px; flex: none; display: flex; flex-direction: column; }
.doctabs { height: 21px; flex: none; display: flex; align-items: center; }
.doctab { margin-left: 3px; width: 47px; font-size: 11.700px; white-space: nowrap; }
.doctab-active { height: 21px; width: 98px; margin-left: 23px; background: #529fb9; color: #fff; display: flex; align-items: center; padding-left: 6px; font-size: 12px; }
.doctab-active span { margin-left: 4px; }
.docsm { width: 10px; height: 12px; margin-left: 7px; }
.docx { width: 9px; height: 9px; margin-left: 5px; }
.graphics { flex: 1; position: relative; border-top: 2px solid #529fb9; border-bottom: 1px solid #dcdcdc; background: linear-gradient(#b2b2b2, #cfd0d1 35%, #e0e1e3 65%, #e6e7e9); }
.triad { position: absolute; left: 29px; top: 677px; width: 110px; height: 110px; }
.ax { font: 13px "Liberation Sans", sans-serif; }
.ax-y { fill: #3f9e55; } .ax-z { fill: #2d49d6; } .ax-x { fill: #d63333; }
.gutter { width: 77px; flex: none; display: flex; flex-direction: column; padding: 0 0 6px 9px; }
.gutter .arrow-left { margin-top: auto; }
.rightbar { flex: 1; background: #dcdcdc; border-left: 1px solid #aaa; display: flex; flex-direction: column; gap: 18px; padding: 5px 0 0 3px; }
.gearicon { margin-left: 3px; }
.rightbar .big { margin-top: 12px; }

/* bottom */
.blank { height: 72px; flex: none; display: flex; justify-content: flex-end; padding: 59px 5px 0 0; }
.status { height: 22px; flex: none; border-top: 1px solid #aaa; display: flex; align-items: center; padding-left: 3px; font-size: 11px; }
.flag { margin-left: 1749px; }
.taskbar { height: 8px; flex: none; position: relative; display: flex; overflow: hidden; border-top: 1px solid #1c3d5c; background: linear-gradient(90deg, #1d5c94 0, #4a9ac6 8%, #8cc7da 13%, #6cb5d2 20%, #2f7db3 30%, #1a5c98 60%, #17508c 100%); }
.orb { width: 28px; height: 28px; margin-left: 14px; border-radius: 50%; background: #cfe3ee; border: 1px solid #fff; }
.flagapp { width: 14px; height: 10px; background: #e8434f; display: block; }
.flagapp.first { margin-left: 33px; }
.folderapp { width: 15px; height: 10px; margin-left: 46px; background: #e8c66e; }
.taskbtn { width: 59px; height: 12px; background: linear-gradient(#e4f2f8, #bfdeeb); border: 1px solid #24455f; border-radius: 2px 2px 0 0; display: flex; justify-content: center; padding-top: 2px; }
.b1 { margin-left: 32px; }
.b2 { margin-left: 3px; }
.greenapp { width: 22px; height: 10px; border-radius: 50%; border: 2px solid #58b948; background: #fff; }
.clock { margin: 5px 0 0 1546px; color: #fff; font-size: 12px; line-height: 14px; width: 50px; }
.showdesk { margin-left: auto; width: 14px; background: #5e88ad; border: 1px solid #9fbdd4; }

/* dialog */
.dialog { position: absolute; left: 1075px; top: 107px; width: 474px; height: 478px; background: #eee; border: 1px solid #aaa; border-top: 0; display: flex; flex-direction: column; }
.dlg-title { height: 29px; flex: none; margin: 0 -1px; background: #549fba; color: #fff; display: flex; align-items: center; padding: 1px 0 0 9px; }
.dlg-help { margin-left: auto; font: bold 15px "Liberation Sans", sans-serif; }
.dlg-x { width: 12px; height: 12px; margin: 0 7px 0 13px; }
.dlg-tabs { height: 29px; flex: none; display: flex; align-items: flex-end; margin: 5px 0 0 10px; }
.dt { height: 28px; border: 1px solid #c4c4c4; background: #eee; display: flex; align-items: center; justify-content: center; white-space: nowrap; }
.dt.on { width: 55px; height: 31px; background: #fff; border-bottom: 0; position: relative; top: 1px; z-index: 1; margin-top: -2px; }
.t2 { width: 67px; } .t3 { width: 63px; margin-left: 1px; } .t4 { width: 92px; margin-left: 1px; }
.dlg-panel { width: 454px; height: 368px; flex: none; margin: 0 0 0 9px; background: #fff; border: 1px solid #bbb; padding: 14px 0 0 6px; }
.dlg-desc { margin: 0; line-height: 18px; font: 12px/18px "Noto Sans CJK SC", "Noto Sans", sans-serif; white-space: nowrap; }
.dlg-cols { display: flex; margin-top: 11px; }
h4 { margin: 0; font-weight: 400; font-size: 13px; color: #1c7a9e; line-height: 18px; }
.cat { width: 239px; height: 299px; border-right: 1px solid #ddd; border-bottom: 2px solid #ddd; padding: 0 0 0 10px; }
.cat h4 { margin: 0 0 4px -1px; }
.tree { width: 218px; height: 266px; border: 1px solid #ddd; display: flex; }
.rows { width: 200px; padding-top: 1px; margin-left: 1px; }
.row { height: 20px; padding-top: 2px; display: flex; align-items: center; font-size: 12px; letter-spacing: .15px; border-bottom: 1px solid #eee; white-space: nowrap; background-image: linear-gradient(#999 50%, transparent 50%); background-size: 1px 2px; background-repeat: repeat-y; background-position: 9px 0; background-color: #fff; }
.row.alt { background-color: #f8f8f8; }
.lv2 { background-image: linear-gradient(#999 50%, transparent 50%), linear-gradient(#999 50%, transparent 50%); background-size: 1px 2px, 1px 2px; background-repeat: repeat-y, repeat-y; background-position: 9px 0, 28px 0; padding-left: 24px; }
.lv1 { padding-left: 4px; }
.last { background-size: 1px 2px; background-position: 9px -10px; background-repeat: no-repeat; }
.pb { width: 9px; height: 9px; flex: none; margin-top: -2px; border: 1px solid #ccc; background: #fff linear-gradient(#222, #222) center / 5px 1px no-repeat; position: relative; }
.pb::after { content: ""; position: absolute; left: 3px; top: 1px; width: 1px; height: 5px; background: #222; }
.row .pb + span { margin-left: 7px; }
.tick { width: 7px; height: 1px; margin: -2px 3px 0 6px; background: linear-gradient(90deg, #999 50%, transparent 50%) 0 0 / 2px 1px; }
.row .sel { flex: 1; height: 20px; margin: -2px 0 0 5px !important; padding-left: 2px; line-height: 20px; background: #8bc0d2; outline: 1px dotted #111; outline-offset: -1px; }
.sb { width: 16px; background: #efefef; display: flex; flex-direction: column; align-items: center; }
.sb-up { height: 20px; width: 100%; position: relative; }
.sb-up::after { content: ""; position: absolute; left: 5px; top: 8px; border: 3px solid transparent; border-bottom: 4px solid #555; border-top: 0; }
.sb-thumb { height: 100px; width: 15px; margin-top: 126px; border: 1px solid #aaa; border-radius: 2px; background: linear-gradient(90deg, #f6f6f6, #bbb); display: flex; align-items: center; justify-content: center; }
.sb-thumb i { width: 7px; height: 7px; background: repeating-linear-gradient(#666 0 1px, transparent 1px 2px); }
.sb-down { height: 16px; width: 100%; position: relative; }
.sb-down::after { content: ""; position: absolute; left: 5px; top: 7px; border: 3px solid transparent; border-top: 4px solid #555; border-bottom: 0; }
.side { width: 202px; display: flex; flex-direction: column; }
.searchbox { height: 57px; border-right: 1px solid #ddd; border-bottom: 2px solid #ddd; padding: 0 0 0 11px; }
.searchbox h4 { margin-bottom: 4px; }
.searchrow { display: flex; }
.field { width: 154px; height: 23px; border: 1px solid #aaa; background: #fff; }
.magbtn { width: 24px; height: 23px; margin-left: 2px; border: 1px solid #aaa; display: flex; align-items: center; justify-content: center; }
.itembox { flex: 1; margin-top: 3px; height: 239px; border-right: 1px solid #ddd; border-bottom: 2px solid #ddd; padding: 0 0 0 11px; }
.itembox h4 { margin-bottom: 5px; }
.itemlist { width: 180px; height: 206px; border: 1px solid #aaa; }
.dlg-foot { display: flex; justify-content: flex-end; gap: 2px; margin: 3px 12px 0 0; }
.btn { width: 59px; height: 28px; border: 1px solid #aaa; background: #eee; display: flex; align-items: center; justify-content: center; }

.redring { position: absolute; left: 1047px; top: 386px; width: 286px; height: 34px; }
.mark { position: absolute; left: 1637px; top: 953px; width: 72px; height: 82px; opacity: .9; }
```
